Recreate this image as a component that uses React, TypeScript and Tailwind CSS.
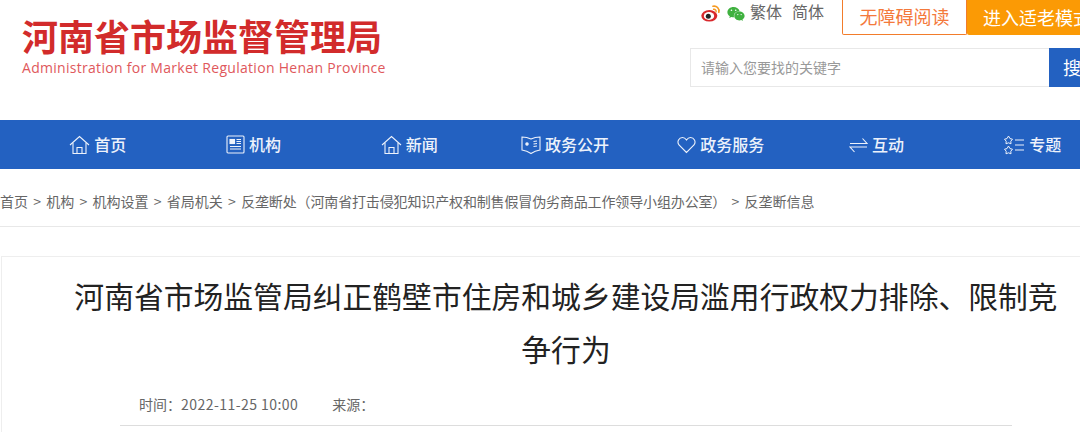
import { FaWeixin } from "react-icons/fa";

const fontStack = "font-['Noto_Sans_CJK_SC','Liberation_Sans',sans-serif]";

function HomeIcon() {
  return (
    <svg width="21" height="20" viewBox="0 0 21 20" fill="none" stroke="currentColor" strokeWidth="1.1">
      <path d="M1 10 10.5 1.5 20 10" />
      <path d="M4 8v10.5h13V8" />
      <path d="M8 18.5v-6h5v6" />
    </svg>
  );
}

function OrgIcon() {
  return (
    <svg width="19" height="19" viewBox="0 0 19 19" fill="none" stroke="currentColor" strokeWidth="1.1">
      <rect x="1" y="1" width="17" height="17" rx="1" />
      <rect x="4" y="4.5" width="4.5" height="4" fill="currentColor" />
      <path d="M10.5 4.5H15M10.5 6.5H15M10.5 8.5H15M4 11.5H15M4 14H15" />
    </svg>
  );
}

function OpenIcon() {
  return (
    <svg width="20" height="20" viewBox="0 0 20 20" fill="none" stroke="currentColor" strokeWidth="1.1">
      <path d="M1 2c3 0 6 .5 9 2 3-1.500 6-2 9-2v13c-3 .5-6 1.500-9 3.500C7 16.500 4 15.500 1 15Z" />
      <circle cx="6" cy="9" r="1.200" fill="currentColor" />
      <path d="M12.500 6.500 16 6M12.500 9 16 8.500M12.500 11.500 16 11" />
    </svg>
  );
}

function HeartIcon() {
  return (
    <svg width="19" height="18" viewBox="0 0 19 18" fill="none" stroke="currentColor" strokeWidth="1.1">
      <path d="M9.500 16.500 2 9C-.5 5.500 2 1.500 5.500 1.500c1.800 0 3 1 4 2.500 1-1.500 2.200-2.500 4-2.500C17 1.500 19.500 5.500 17 9Z" />
    </svg>
  );
}

function SwapIcon() {
  return (
    <svg width="19" height="18" viewBox="0 0 19 18" fill="none" stroke="currentColor" strokeWidth="1.1">
      <path d="M1 7.500h17L13.500 2.500" />
      <path d="M18 11H1l4.500 5" />
    </svg>
  );
}

function TopicIcon() {
  return (
    <svg width="22" height="20" viewBox="0 0 22 20" fill="none" stroke="currentColor" strokeWidth="1">
      <path d="M5.500 1 7 3.600l2.500.6-1.700 2 .2 2.600-2.500-1-2.500 1 .2-2.600-1.700-2L4 3.600Z" />
      <path d="M5.500 11 7 13.600l2.500.6-1.700 2 .2 2.600-2.500-1-2.500 1 .2-2.600-1.700-2L4 13.600Z" />
      <path d="M12 5h9M12 10h9M12 15h9" />
    </svg>
  );
}

function WeiboIcon() {
  return (
    <svg width="20" height="20" viewBox="0 0 20 20" className="shrink-0">
      <ellipse cx="8.300" cy="12.800" rx="8" ry="5.800" fill="#d8282c" />
      <ellipse cx="8" cy="13" rx="5.200" ry="3.900" fill="#fff" />
      <circle cx="7.300" cy="13.300" r="2.500" fill="#222" />
      <path d="M12 3.200c3.500-.9 6.800 2.300 5.800 6" fill="none" stroke="#f59a23" strokeWidth="1.700" strokeLinecap="round" />
      <path d="M12.600 6.300c1.600-.3 2.900 1 2.500 2.600" fill="none" stroke="#f59a23" strokeWidth="1.400" strokeLinecap="round" />
    </svg>
  );
}

const navItems = [
  { label: "首页", icon: <HomeIcon /> },
  { label: "机构", icon: <OrgIcon /> },
  { label: "新闻", icon: <HomeIcon /> },
  { label: "政务公开", icon: <OpenIcon /> },
  { label: "政务服务", icon: <HeartIcon /> },
  { label: "互动", icon: <SwapIcon /> },
  { label: "专题", icon: <TopicIcon /> },
];

const crumbs = ["首页", "机构", "机构设置", "省局机关"];

export default function App() {
  return (
    <div className={`w-[1080px] h-[432px] overflow-hidden bg-white ${fontStack}`}>
      <header className="h-[120px] flex justify-between">
        <div className="pl-[22px] pt-[15px]">
          <h1 className="text-[36px] leading-[40px] font-bold text-[#d22b2b] whitespace-nowrap">河南省市场监督管理局</h1>
          <p className="mt-[3px] text-[14px] leading-[20px] tracking-[0.29px] text-[#e0585c] whitespace-nowrap font-['Open_Sans',sans-serif]">
            Administration for Market Regulation Henan Province
          </p>
        </div>
        <div className="w-[390px] shrink-0">
          <div className="flex h-[36px]">
            <div className="flex items-start gap-[6px] pl-[11px] pt-[3px] w-[152px] shrink-0 text-[16px] leading-[18px] text-[#666]">
              <WeiboIcon />
              <FaWeixin className="text-[#3fb13f] text-[18px] mt-[2px] shrink-0" />
              <span className="-ml-[1px] -mt-[1px] whitespace-nowrap">繁体</span>
              <span className="ml-[4px] -mt-[1px] whitespace-nowrap">简体</span>
            </div>
            <div className="w-[125px] shrink-0 h-[35px] pb-[1px] border border-t-0 border-[#f27c2b] rounded-b-[2px] flex items-center justify-center text-[18px] text-[#f4793b] whitespace-nowrap">
              无障碍阅读
            </div>
            <div className="w-[130px] shrink-0 h-[35px] pb-[1px] bg-[#fb9a05] pl-[16px] flex items-center text-[18px] text-white whitespace-nowrap rounded-b-[2px]">
              进入适老模式
            </div>
          </div>
          <div className="mt-[12px] flex h-[39px] w-[420px]">
            <div className="w-[359px] border border-[#e8e8e8] border-r-0 pl-[10px] flex items-center text-[14px] text-[#999] whitespace-nowrap">
              请输入您要找的关键字
            </div>
            <div className="w-[61px] bg-[#2361c1] pl-[14px] flex items-center text-[18px] text-white whitespace-nowrap">
              搜索
            </div>
          </div>
        </div>
      </header>

      <nav className="h-[49px] bg-[#2361c1] pl-[20px] text-[16px] font-medium text-[#edf2fb]">
        <ul className="w-[1090px] h-full grid grid-cols-7">
          {navItems.map((item) => (
            <li key={item.label} className="flex items-center justify-center gap-[4px] whitespace-nowrap">
              {item.icon}
              <span className="pb-[2px]">{item.label}</span>
            </li>
          ))}
        </ul>
      </nav>

      <div className="h-[58px] border-b border-[#e8e8e8] flex items-center pt-[8px] text-[14px] text-[#666] whitespace-nowrap">
        {crumbs.map((crumb) => (
          <span key={crumb} className="flex items-center">
            {crumb}
            <span className="mx-[5.25px]">&gt;</span>
          </span>
        ))}
        <span className="tracking-[-0.14px]">反垄断处（河南省打击侵犯知识产权和制售假冒伪劣商品工作领导小组办公室）</span>
        <span className="mx-[5.25px]">&gt;</span>
        <span>反垄断信息</span>
      </div>

      <article className="mt-[29px] ml-[1px] w-[1130px] h-[300px] border border-[#eee] bg-white">
        <h2 className="mx-auto w-[1010px] pt-[12px] text-center text-[29.8px] leading-[53px] text-[#222]">
          河南省市场监管局纠正鹤壁市住房和城乡建设局滥用行政权力排除、限制竞争行为
        </h2>
        <div className="mx-auto w-[892px] h-[44px] border-b border-[#ddd] mt-[7px] pl-[19px] pt-[2px] flex items-center text-[14px] text-[#666]">
          <span>时间：<span className="tracking-[0.45px]">2022-11-25 10:00</span></span>
          <span className="ml-[34px]">来源：</span>
        </div>
      </article>
    </div>
  );
}
